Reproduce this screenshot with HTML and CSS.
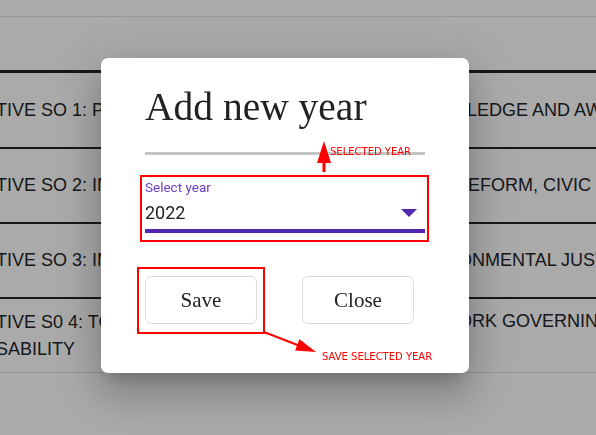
FILE: index.html
```html
<!DOCTYPE html>
<html lang="en">
<head>
<meta charset="utf-8">
<title>Add new year</title>
<link rel="stylesheet" href="styles.css">
</head>
<body>
<div class="page">
  <div class="topbar"></div>
  <div class="thead"></div>
  <div class="row">
    <div class="cell-left">TIVE SO 1: PROMOTE KNOW</div>
    <div class="cell-right r1">LEDGE AND AWARENESS</div>
  </div>
  <div class="row">
    <div class="cell-left">TIVE SO 2: INSTITUTIONAL R</div>
    <div class="cell-right r2">EFORM, CIVIC ENGAGEMENT</div>
  </div>
  <div class="row">
    <div class="cell-left">TIVE SO 3: IMPROVE ENVIR</div>
    <div class="cell-right r3">ONMENTAL JUSTICE</div>
  </div>
  <div class="row row-last">
    <div class="cell-left">TIVE S0 4: TO STRENGTHEN THE FRAMEW<br>SABILITY</div>
    <div class="cell-right r4">ORK GOVERNING</div>
  </div>
</div>

<div class="backdrop"></div>

<div class="dialog" role="dialog">
  <h2 class="dialog-title">Add new year</h2>
  <div class="track"></div>
  <div class="select">
    <div class="select-label">Select year</div>
    <div class="select-value">
      <span>2022</span>
      <svg class="caret" width="16" height="8" viewBox="0 0 16 8"><polygon points="0,0 16,0 8,8" fill="#5127ad"/></svg>
    </div>
    <div class="select-line"></div>
  </div>
  <div class="actions">
    <button class="btn">Save</button>
    <button class="btn">Close</button>
  </div>
</div>

<svg class="annotations" width="596" height="435" viewBox="0 0 596 435">
  <rect x="141" y="176" width="287" height="65" fill="none" stroke="#ff0000" stroke-width="2"/>
  <rect x="138" y="268" width="126" height="65" fill="none" stroke="#ff0000" stroke-width="2"/>
  <line x1="324" y1="172" x2="324" y2="160" stroke="#ff0000" stroke-width="3"/>
  <polygon points="324,141 331,163 317,163" fill="#ff0000"/>
  <line x1="264" y1="332" x2="300" y2="346" stroke="#ff0000" stroke-width="2"/>
  <polygon points="316,352 299.5,339.2 295.1,350.4" fill="#ff0000"/>
  <text class="note" x="330" y="155">SELECTED YEAR</text>
  <text class="note" x="322" y="360">SAVE SELECTED YEAR</text>
</svg>
</body>
</html>
```
FILE: styles.css
```css
html, body {
  margin: 0;
  padding: 0;
  background: #ffffff;
}

body {
  width: 596px;
  height: 435px;
  overflow: hidden;
  font-family: "Liberation Sans", Arial, sans-serif;
  color: #212529;
}

.page {
  width: 596px;
}

.topbar {
  height: 16px;
  border-bottom: 1px solid #dee2e6;
}

.thead {
  height: 53px;
  border-bottom: 3px solid #212529;
}

.row {
  display: flex;
  align-items: center;
  height: 74px;
  border-bottom: 2px solid #212529;
  font-size: 18px;
  line-height: 27px;
}

.row + .row {
  height: 73px;
}

.row-last.row {
  border-bottom: 1px solid #dee2e6;
}

.cell-left {
  flex: 0 0 461px;
  margin-left: -4px;
  overflow: hidden;
  white-space: nowrap;
}

.cell-right {
  flex: 1 1 auto;
  white-space: nowrap;
  overflow: hidden;
}

.r1 { padding-left: 10px; }
.r2 { padding-left: 11px; }
.r3 { padding-left: 1px; }
.r4 {
  padding-left: 1px;
  align-self: flex-start;
  margin-top: 9px;
}

.backdrop {
  position: fixed;
  inset: 0;
  background: rgba(0, 0, 0, 0.333);
}

.dialog {
  position: absolute;
  left: 101px;
  top: 58px;
  width: 280px;
  padding: 26px 44px 49px;
  background: #ffffff;
  border-radius: 7px;
  box-shadow:
    0 11px 15px -7px rgba(0, 0, 0, 0.2),
    0 24px 38px 3px rgba(0, 0, 0, 0.14),
    0 9px 46px 8px rgba(0, 0, 0, 0.12);
}

.dialog-title {
  margin: 0;
  font-family: "Liberation Serif", "Times New Roman", serif;
  font-weight: normal;
  font-size: 39.5px;
  line-height: 46px;
  color: #222222;
}

.track {
  margin-top: 22px;
  height: 3px;
  background: #c4c4c4;
}

.select {
  margin-top: 24px;
  font-family: Roboto, "Liberation Sans", sans-serif;
}

.select-label {
  font-size: 13.5px;
  line-height: 16px;
  color: #6a3fc4;
}

.select-value {
  margin-top: 6px;
  display: flex;
  align-items: center;
  justify-content: space-between;
  font-size: 18px;
  line-height: 24px;
  color: #222222;
  padding-right: 8px;
}

.caret {
  display: block;
}

.select-line {
  margin-top: 4px;
  height: 4px;
  background: #5127b1;
}

.actions {
  margin-top: 43px;
  display: flex;
  gap: 45px;
}

.btn {
  width: 112px;
  height: 48px;
  padding: 0;
  background: #ffffff;
  border: 1px solid #dcdcdc;
  border-radius: 6px;
  font-family: "Liberation Serif", "Times New Roman", serif;
  font-size: 21px;
  color: #222222;
}

.annotations {
  position: fixed;
  left: 0;
  top: 0;
}

.note {
  font-family: "DejaVu Sans", sans-serif;
  font-size: 10px;
  fill: #ff0000;
}
```
